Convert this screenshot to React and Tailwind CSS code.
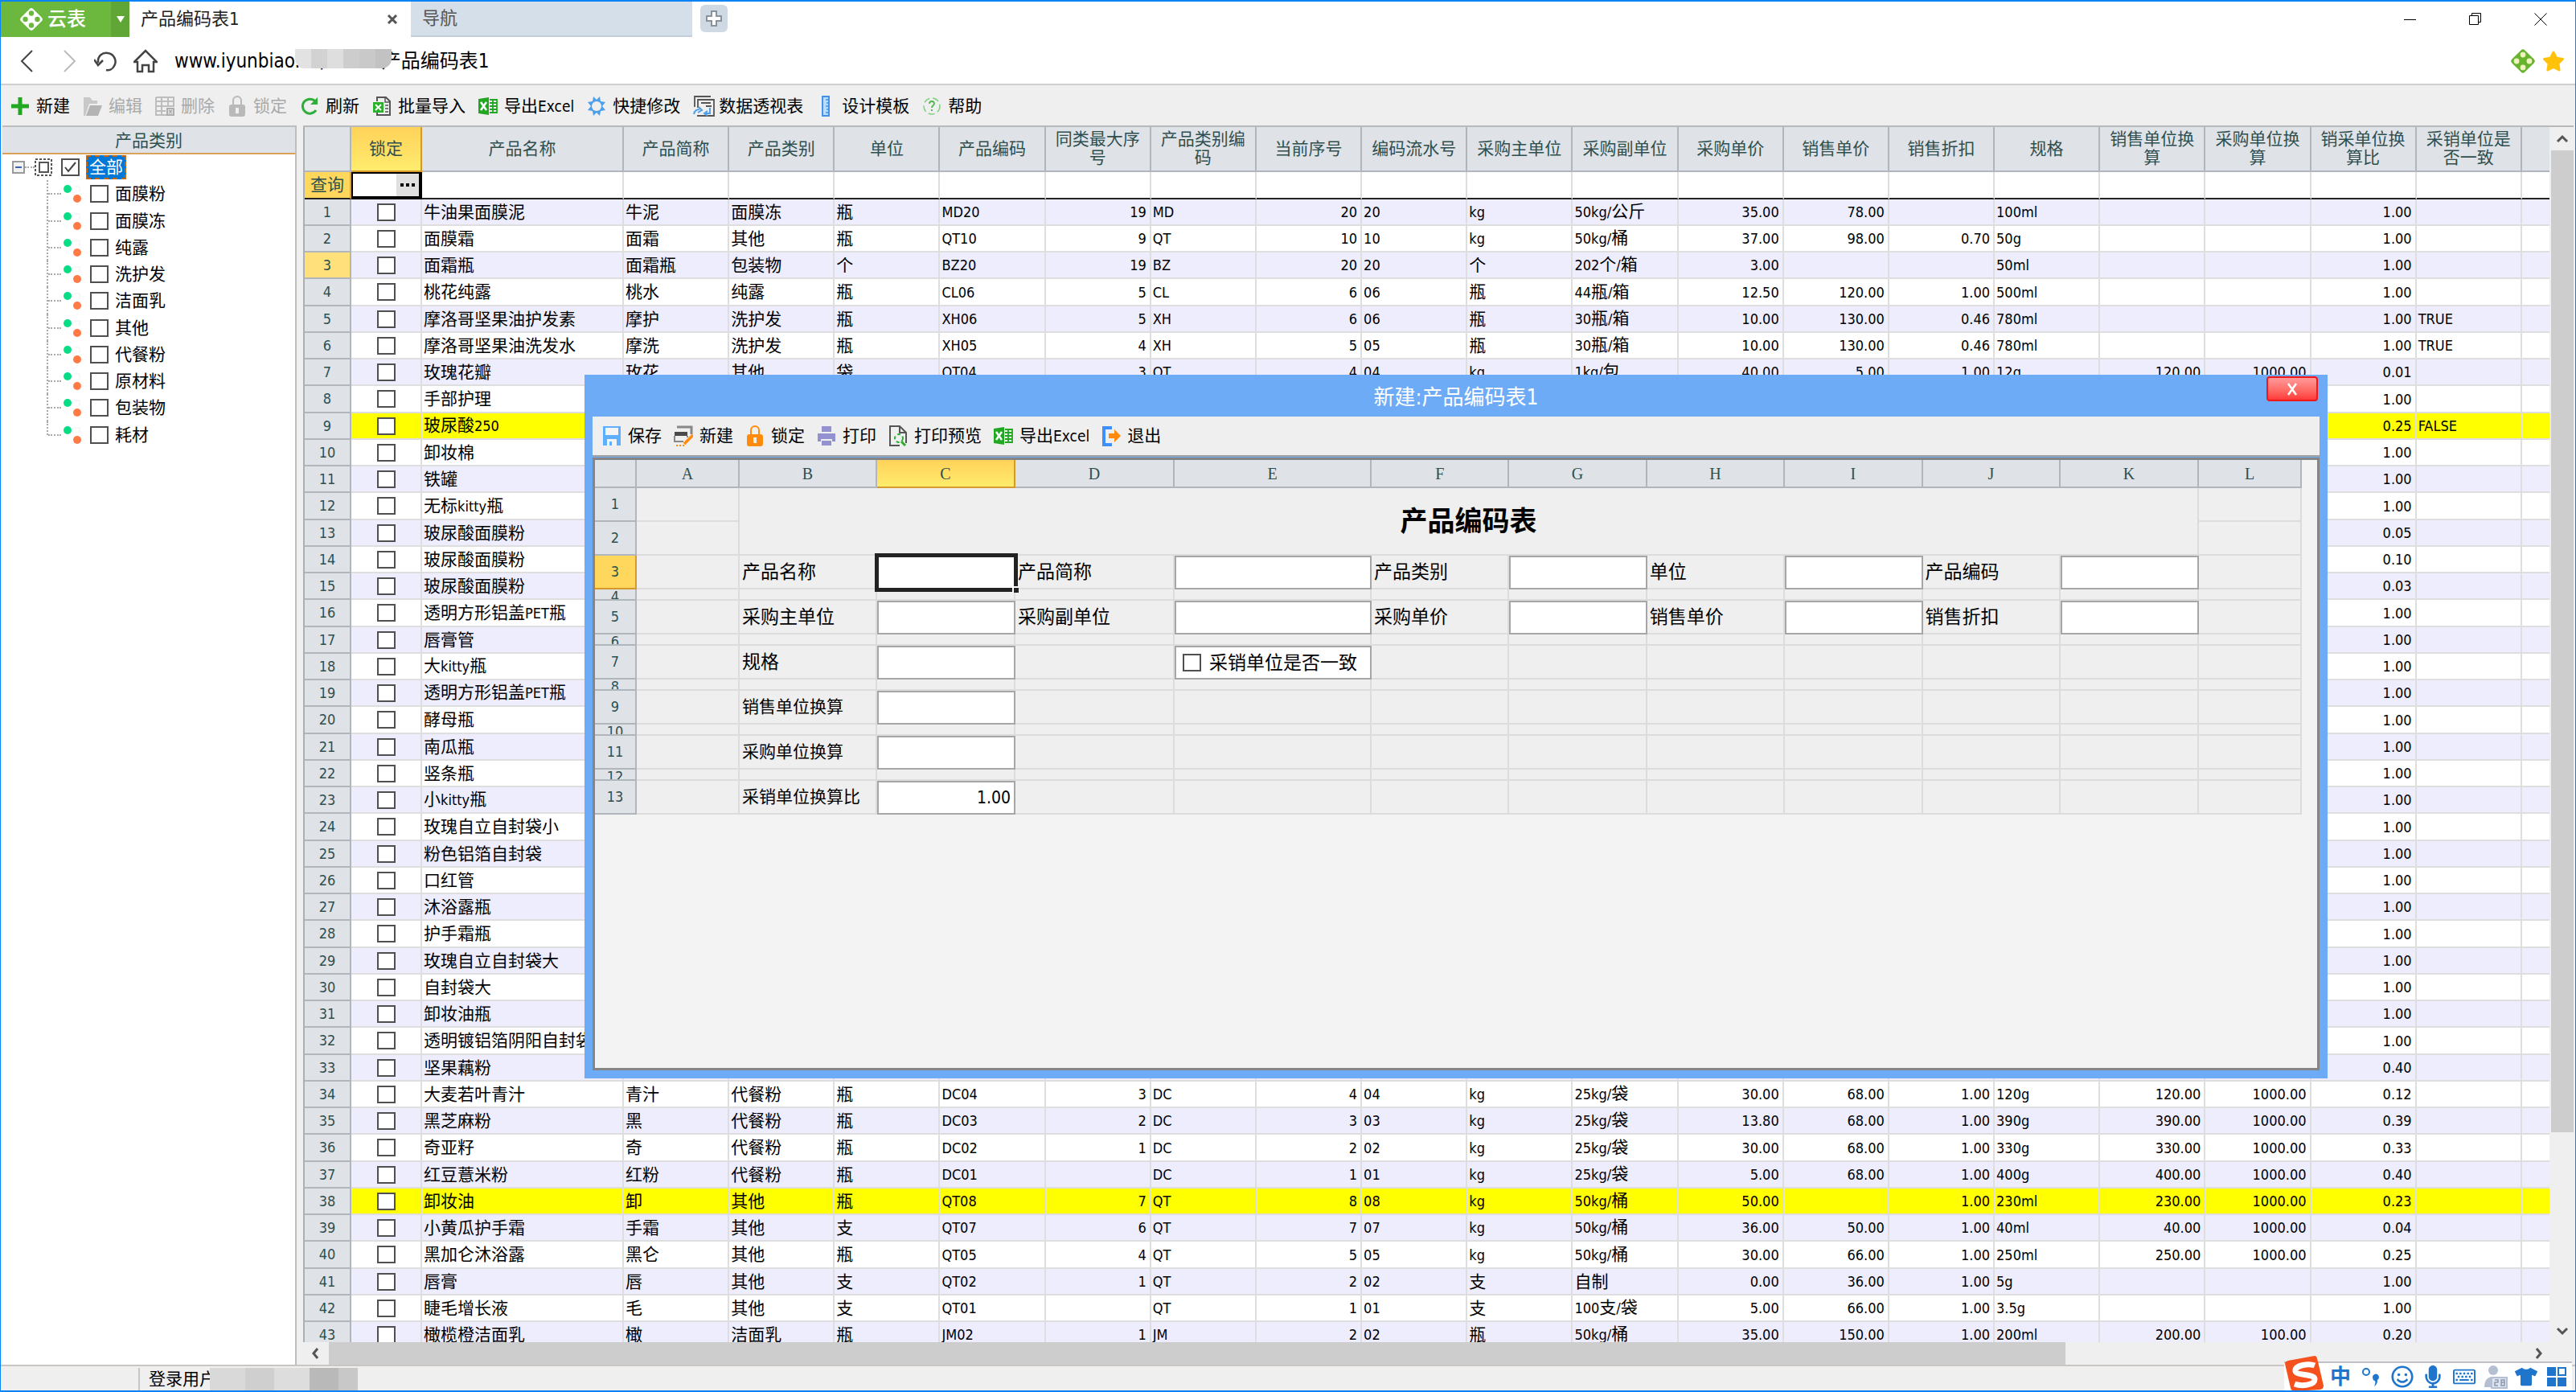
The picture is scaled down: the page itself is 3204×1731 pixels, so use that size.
import { useState } from 'react';
import { FaMicrophone, FaRegKeyboard, FaRegSmile, FaStar, FaTshirt } from 'react-icons/fa';

const categories = ['面膜粉', '面膜冻', '纯露', '洗护发', '洁面乳', '其他', '代餐粉', '原材料', '包装物', '耗材'];

// n = right aligned number
const columns = [
  { title: '产品名称' },
  { title: '产品简称' },
  { title: '产品类别' },
  { title: '单位' },
  { title: '产品编码' },
  { title: '同类最大序号', n: true },
  { title: '产品类别编码' },
  { title: '当前序号', n: true },
  { title: '编码流水号' },
  { title: '采购主单位' },
  { title: '采购副单位' },
  { title: '采购单价', n: true },
  { title: '销售单价', n: true },
  { title: '销售折扣', n: true },
  { title: '规格' },
  { title: '销售单位换算', n: true },
  { title: '采购单位换算', n: true },
  { title: '销采单位换算比', n: true },
  { title: '采销单位是否一致' },
];

const brief = (name, ratio = '1.00', same = '') => [name, ...Array(16).fill(''), ratio, same];

const products = [
  ['牛油果面膜泥', '牛泥', '面膜冻', '瓶', 'MD20', '19', 'MD', '20', '20', 'kg', '50kg/公斤', '35.00', '78.00', '', '100ml', '', '', '1.00', ''],
  ['面膜霜', '面霜', '其他', '瓶', 'QT10', '9', 'QT', '10', '10', 'kg', '50kg/桶', '37.00', '98.00', '0.70', '50g', '', '', '1.00', ''],
  ['面霜瓶', '面霜瓶', '包装物', '个', 'BZ20', '19', 'BZ', '20', '20', '个', '202个/箱', '3.00', '', '', '50ml', '', '', '1.00', ''],
  ['桃花纯露', '桃水', '纯露', '瓶', 'CL06', '5', 'CL', '6', '06', '瓶', '44瓶/箱', '12.50', '120.00', '1.00', '500ml', '', '', '1.00', ''],
  ['摩洛哥坚果油护发素', '摩护', '洗护发', '瓶', 'XH06', '5', 'XH', '6', '06', '瓶', '30瓶/箱', '10.00', '130.00', '0.46', '780ml', '', '', '1.00', 'TRUE'],
  ['摩洛哥坚果油洗发水', '摩洗', '洗护发', '瓶', 'XH05', '4', 'XH', '5', '05', '瓶', '30瓶/箱', '10.00', '130.00', '0.46', '780ml', '', '', '1.00', 'TRUE'],
  ['玫瑰花瓣', '玫花', '其他', '袋', 'QT04', '3', 'QT', '4', '04', 'kg', '1kg/包', '40.00', '5.00', '1.00', '12g', '120.00', '1000.00', '0.01', ''],
  brief('手部护理'),
  brief('玻尿酸250', '0.25', 'FALSE'),
  brief('卸妆棉'),
  brief('铁罐'),
  brief('无标kitty瓶'),
  brief('玻尿酸面膜粉', '0.05'),
  brief('玻尿酸面膜粉', '0.10'),
  brief('玻尿酸面膜粉', '0.03'),
  brief('透明方形铝盖PET瓶'),
  brief('唇膏管'),
  brief('大kitty瓶'),
  brief('透明方形铝盖PET瓶'),
  brief('酵母瓶'),
  brief('南瓜瓶'),
  brief('竖条瓶'),
  brief('小kitty瓶'),
  brief('玫瑰自立自封袋小'),
  brief('粉色铝箔自封袋'),
  brief('口红管'),
  brief('沐浴露瓶'),
  brief('护手霜瓶'),
  brief('玫瑰自立自封袋大'),
  brief('自封袋大'),
  brief('卸妆油瓶'),
  brief('透明镀铝箔阴阳自封袋'),
  brief('坚果藕粉', '0.40'),
  ['大麦若叶青汁', '青汁', '代餐粉', '瓶', 'DC04', '3', 'DC', '4', '04', 'kg', '25kg/袋', '30.00', '68.00', '1.00', '120g', '120.00', '1000.00', '0.12', ''],
  ['黑芝麻粉', '黑', '代餐粉', '瓶', 'DC03', '2', 'DC', '3', '03', 'kg', '25kg/袋', '13.80', '68.00', '1.00', '390g', '390.00', '1000.00', '0.39', ''],
  ['奇亚籽', '奇', '代餐粉', '瓶', 'DC02', '1', 'DC', '2', '02', 'kg', '25kg/袋', '30.00', '68.00', '1.00', '330g', '330.00', '1000.00', '0.33', ''],
  ['红豆薏米粉', '红粉', '代餐粉', '瓶', 'DC01', '', 'DC', '1', '01', 'kg', '25kg/袋', '5.00', '68.00', '1.00', '400g', '400.00', '1000.00', '0.40', ''],
  ['卸妆油', '卸', '其他', '瓶', 'QT08', '7', 'QT', '8', '08', 'kg', '50kg/桶', '50.00', '', '1.00', '230ml', '230.00', '1000.00', '0.23', ''],
  ['小黄瓜护手霜', '手霜', '其他', '支', 'QT07', '6', 'QT', '7', '07', 'kg', '50kg/桶', '36.00', '50.00', '1.00', '40ml', '40.00', '1000.00', '0.04', ''],
  ['黑加仑沐浴露', '黑仑', '其他', '瓶', 'QT05', '4', 'QT', '5', '05', 'kg', '50kg/桶', '30.00', '66.00', '1.00', '250ml', '250.00', '1000.00', '0.25', ''],
  ['唇膏', '唇', '其他', '支', 'QT02', '1', 'QT', '2', '02', '支', '自制', '0.00', '36.00', '1.00', '5g', '', '', '1.00', ''],
  ['睫毛增长液', '毛', '其他', '支', 'QT01', '', 'QT', '1', '01', '支', '100支/袋', '5.00', '66.00', '1.00', '3.5g', '', '', '1.00', ''],
  ['橄榄橙洁面乳', '橄', '洁面乳', '瓶', 'JM02', '1', 'JM', '2', '02', '瓶', '50kg/桶', '35.00', '150.00', '1.00', '200ml', '200.00', '100.00', '0.20', ''],
];

const highlighted = [9, 38];

const sheetColumns = ['A', 'B', 'C', 'D', 'E', 'F', 'G', 'H', 'I', 'J', 'K', 'L'];

const sheetRows = [
  { n: 3, tall: true, labels: { B: '产品名称', D: '产品简称', F: '产品类别', H: '单位', J: '产品编码' } },
  { n: 4 },
  { n: 5, tall: true, labels: { B: '采购主单位', D: '采购副单位', F: '采购单价', H: '销售单价', J: '销售折扣' } },
  { n: 6 },
  { n: 7, tall: true, labels: { B: '规格' }, check: 'E' },
  { n: 8 },
  { n: 9, tall: true, labels: { B: '销售单位换算' } },
  { n: 10 },
  { n: 11, tall: true, labels: { B: '采购单位换算' } },
  { n: 12 },
  { n: 13, tall: true, labels: { B: '采销单位换算比' }, value: '1.00' },
];

// latin runs are set smaller than the chinese text around them
function Mixed({ text }) {
  return text.split(/([\x20-\x7e]+)/).map((part, i) =>
    i % 2 ? <span key={i} className="text-[18px]">{part}</span> : part,
  );
}

function Icon({ children, className = 'w-6 h-[26px]' }) {
  return (
    <svg viewBox="0 0 24 26" fill="none" className={`shrink-0 ${className}`} aria-hidden="true">
      {children}
    </svg>
  );
}

const PlusIcon = () => <Icon><path d="M12 2v22M1 13h22" stroke="#22a722" strokeWidth="5" /></Icon>;
const FolderIcon = () => (
  <Icon>
    <path d="M1 25V2h8l3 4h6v4H8L3 25z" fill="#c8c8c8" />
    <path d="M9 12h15l-5 13H4z" fill="#b4b4b4" />
  </Icon>
);
const DeleteGridIcon = () => (
  <Icon>
    <path d="M1 2h22v12M1 2v22h14M1 7h22M1 13h22M1 19h12M8 2v22M16 2v12" stroke="#bdbdbd" strokeWidth="2" />
    <path d="M15 16h8v8h-8zM17 18l4 4M21 18l-4 4" stroke="#adadad" strokeWidth="2" />
  </Icon>
);
const LockIcon = ({ color = '#b9b9b9' }) => (
  <Icon>
    <path d="M7 12V6a5 5 0 0 1 10 0v6" stroke={color} strokeWidth="2" />
    <rect x="2" y="11" width="20" height="15" rx="3" fill={color} />
    <path d="M12 15v7" stroke="#efefef" strokeWidth="4" />
  </Icon>
);
const RefreshIcon = () => (
  <Icon>
    <path d="M20 18a9 9 0 1 1-1-11" stroke="#2fae3c" strokeWidth="3" />
    <path d="M22 2v9h-9z" fill="#2fae3c" />
  </Icon>
);
const ImportIcon = () => (
  <Icon>
    <path d="M6 7V2h11l5 5v17H6v-3" stroke="#555" strokeWidth="2" />
    <path d="M16 2v6h6M16 12h4M16 16h4M16 20h4" stroke="#555" strokeWidth="1.5" />
    <path d="M1 8h13v13H1z" fill="#2bb02b" />
    <path d="M4 11l7 7M11 11l-7 7" stroke="#fff" strokeWidth="2" />
  </Icon>
);
const ExcelIcon = () => (
  <Icon>
    <path d="M0 4l13-2v22L0 22z" fill="#22a722" />
    <path d="M3 8l7 10M10 8L3 18" stroke="#fff" strokeWidth="2.5" />
    <path d="M14 5h9v16h-9M14 9h9M14 13h9M14 17h9M18 5v16" stroke="#22a722" strokeWidth="1.8" />
  </Icon>
);
const GearIcon = () => (
  <Icon>
    <path
      d="M12 5l4-4 1 6 6 1-4 5 4 5-6 1-1 6-4-4-4 4-1-6-6-1 4-5-4-5 6-1 1-6z"
      fill="#4d9fea"
    />
    <circle cx="12" cy="13" r="6" fill="#efefef" />
  </Icon>
);
const PivotIcon = () => (
  <Icon className="w-7 h-[26px]">
    <path d="M0 14V1h20M4 15V5h20v20H3M8 9h12M14 13h7" stroke="#555" strokeWidth="1.8" />
    <path d="M-1 23c1-5 4-6 7-6M5 14l4 4-5 3M12 22h7v-7M16 19l-4 3 4 3" stroke="#4d9fea" strokeWidth="2" />
  </Icon>
);
const RulerIcon = () => (
  <Icon>
    <rect x="8" y="1" width="8" height="24" fill="#b9dcff" stroke="#4393ee" strokeWidth="2" />
    <path d="M12 5h4M13 9h3M12 13h4M13 17h3M12 21h4" stroke="#4393ee" strokeWidth="1.5" />
  </Icon>
);
const HelpIcon = () => (
  <Icon>
    <circle cx="12" cy="13" r="10" stroke="#7fcf7f" strokeWidth="1.5" strokeDasharray="8 4" />
    <path d="M9 10c0-4 6-4 6 0 0 2-3 2-3 5M12 17v2" stroke="#4fb84f" strokeWidth="1.8" />
  </Icon>
);
const SaveIcon = () => (
  <Icon>
    <path d="M1 1h22v24H1z" fill="#5eb0ff" />
    <path d="M4 3h16v9H4zM6 17h12v8H6z" fill="#f4f4f4" />
    <path d="M9 20h3v5H9z" fill="#5eb0ff" />
  </Icon>
);
const NewFormIcon = () => (
  <Icon>
    <path d="M4 2h18v9" stroke="#888" strokeWidth="3" />
    <path d="M1 8h16v5H1z" fill="#4a4a4a" />
    <path d="M1 13v7h11M17 13v2" stroke="#888" strokeWidth="2" />
    <path d="M24 12L13 23" stroke="#ff8a0c" strokeWidth="3.5" />
    <path d="M3 25h10" stroke="#ff8a0c" strokeWidth="2" strokeDasharray="2 2" />
  </Icon>
);
const PrintIcon = () => (
  <Icon>
    <path d="M6 1h12v7H6zM1 10h22v10h-4v-3H5v3H1zM6 19h12v6H6z" fill="#9491d0" />
  </Icon>
);
const PreviewIcon = () => (
  <Icon>
    <path d="M14 25H2V1h12l8 8v13M14 1v8h8" stroke="#555" strokeWidth="2" />
    <circle cx="13" cy="16" r="5" stroke="#2bb02b" strokeWidth="2" strokeDasharray="4 3" />
    <path d="M16 20l5 5" stroke="#2bb02b" strokeWidth="3" />
  </Icon>
);
const ExitIcon = () => (
  <Icon>
    <path d="M13 3H3v21h10" stroke="#3f8ffb" strokeWidth="4" />
    <path d="M9 10h7V5l8 8-8 8v-5H9z" fill="#ff8a0c" />
  </Icon>
);

function Diamond({ className, color, hole }) {
  return (
    <svg viewBox="0 0 30 30" className={className} aria-hidden="true">
      <rect x="5" y="5" width="20" height="20" rx="3" fill={color} transform="rotate(45 15 15)" />
      <circle cx="15" cy="8" r="3" fill={hole} />
      <circle cx="15" cy="22" r="3" fill={hole} />
      <circle cx="8" cy="15" r="3" fill={hole} />
      <circle cx="22" cy="15" r="3" fill={hole} />
    </svg>
  );
}

function ToolButton({ icon, label, disabled }) {
  return (
    <button type="button" disabled={disabled} className="flex items-center gap-2 text-black disabled:text-[#a9a9a9] whitespace-nowrap">
      <span className="w-6 flex items-center">{icon}</span>
      {label}
    </button>
  );
}

function Check({ id, label, checked = false }) {
  const [on, setOn] = useState(checked);
  return (
    <span className="grid w-[23px] h-[22px] shrink-0">
      <input
        id={id}
        type="checkbox"
        aria-label={label}
        checked={on}
        onChange={(e) => setOn(e.target.checked)}
        className="appearance-none col-start-1 row-start-1 w-full h-full bg-white border-2 border-[#505050]"
      />
      {on && (
        <svg viewBox="0 0 23 22" className="col-start-1 row-start-1 pointer-events-none" fill="none">
          <path d="M5 11l4 5 9-11" stroke="#444" strokeWidth="2" />
        </svg>
      )}
    </span>
  );
}

function TitleBar() {
  return (
    <div className="flex items-start h-11 shrink-0 bg-white">
      <button type="button" className="flex items-center h-11 w-[137px] pl-[22px] gap-1 bg-[#6cb83e] text-white text-[24px] font-medium">
        <Diamond className="w-8 h-8" color="#fff" hole="#6cb83e" />
        云表
      </button>
      <button type="button" aria-label="菜单" className="flex items-center justify-center h-11 w-[23px] bg-[#5fa637]">
        <svg viewBox="0 0 10 8" className="w-[10px] h-2"><path d="M0 0h10L5 8z" fill="#fff" /></svg>
      </button>
      <div className="flex items-center justify-between h-11 w-[350px] pl-[14px] pr-4 bg-white text-[22px] text-[#222]">
        产品编码表1
        <button type="button" aria-label="关闭标签">
          <svg viewBox="0 0 14 14" className="w-[14px] h-[14px]"><path d="M2 2l10 10M12 2L2 12" stroke="#555" strokeWidth="3" /></svg>
        </button>
      </div>
      <button type="button" className="flex items-center h-11 w-[350px] pl-[14px] bg-[#d5dfea] border-b-2 border-[#c3ced9] text-[22px] text-[#555]">
        导航
      </button>
      <button type="button" aria-label="新标签" className="flex items-center justify-center w-[34px] h-[34px] ml-[10px] mt-1 rounded-md bg-[#cfd9e3]">
        <svg viewBox="0 0 20 20" className="w-5 h-5"><path d="M7 1h6v6h6v6h-6v6H7v-6H1V7h6z" fill="#fff" stroke="#8a939c" strokeWidth="2" /></svg>
      </button>
      <div className="flex ml-auto mr-[3px]">
        <button type="button" aria-label="最小化" className="flex items-center justify-center w-[81px] h-11">
          <svg viewBox="0 0 16 16" className="w-4 h-4"><path d="M0 8.5h15" stroke="#000" /></svg>
        </button>
        <button type="button" aria-label="还原" className="flex items-center justify-center w-[81px] h-11">
          <svg viewBox="0 0 16 16" className="w-4 h-4" fill="none"><path d="M.5 3.5h11v11H.5zM3.500 3.500V.5h11v11h-3" stroke="#000" /></svg>
        </button>
        <button type="button" aria-label="关闭" className="flex items-center justify-center w-[81px] h-11">
          <svg viewBox="0 0 16 16" className="w-4 h-4"><path d="M.5.5l15 15M15.500.5l-15 15" stroke="#000" /></svg>
        </button>
      </div>
    </div>
  );
}

const mosaic = ['bg-[#e2e2e2]', 'bg-[#d2d2d2]', 'bg-[#dedede]', 'bg-[#cdcdcd]', 'bg-[#c9c9c9]', 'bg-[#c2c2c2]'];

function AddressBar() {
  return (
    <div className="flex items-center h-[60px] shrink-0 pl-5 pr-[13px] pt-[2px] bg-white border-b-2 border-[#cfcfcf]">
      <button type="button" aria-label="后退" className="w-[50px]">
        <svg viewBox="0 0 24 30" className="w-6 h-[30px]" fill="none"><path d="M19 2L6 15l13 13" stroke="#444" strokeWidth="2" /></svg>
      </button>
      <button type="button" aria-label="前进" className="w-[46px]">
        <svg viewBox="0 0 24 30" className="w-6 h-[30px]" fill="none"><path d="M9 2l13 13L9 28" stroke="#bbb" strokeWidth="2" /></svg>
      </button>
      <button type="button" aria-label="刷新" className="w-[49px]">
        <svg viewBox="0 0 30 30" className="w-[30px] h-[30px]" fill="none">
          <path d="M5 17C4 8 11 4 17 5c8 1 12 10 8 16-2 4-6 6-10 5" stroke="#444" strokeWidth="2.500" />
          <path d="M0 13l5 7 6-6" stroke="#444" strokeWidth="2.500" />
        </svg>
      </button>
      <button type="button" aria-label="主页" className="w-[51px]">
        <svg viewBox="0 0 30 30" className="w-[30px] h-[30px]" fill="none">
          <path d="M1 16L15 2l14 14h-4v12h-6v-8h-8v8H5V16z" stroke="#444" strokeWidth="2.500" />
        </svg>
      </button>
      <div className="relative flex-1">
        <input
          aria-label="地址"
          className="w-full text-[24px] leading-[34px] text-black outline-none"
          defaultValue={'www.iyunbiao.cn/\u00a0\u00a0\u00a0\u00a0\u00a0\u00a0\u00a0\u00a0\u00a0\u00a0产品编码表1'}
        />
        <div className="absolute left-[150px] top-[2px] flex h-6 rounded-b-xl overflow-hidden" aria-hidden="true">
          {mosaic.map((tone) => (
            <span key={tone} className={`w-5 h-full ${tone}`} />
          ))}
        </div>
      </div>
      <Diamond className="w-[34px] h-[34px]" color="#69b42e" hole="#eef3c0" />
      <FaStar className="w-[28px] h-[28px] ml-[7px] text-[#ffc20a]" />
    </div>
  );
}

function Toolbar() {
  return (
    <div className="flex items-center gap-4 h-[50px] shrink-0 pl-3 pt-px bg-[#efefef] text-[21px]">
      <ToolButton icon={<PlusIcon />} label="新建" />
      <ToolButton icon={<FolderIcon />} label="编辑" disabled />
      <ToolButton icon={<DeleteGridIcon />} label="删除" disabled />
      <ToolButton icon={<LockIcon />} label="锁定" disabled />
      <ToolButton icon={<RefreshIcon />} label="刷新" />
      <ToolButton icon={<ImportIcon />} label="批量导入" />
      <ToolButton icon={<ExcelIcon />} label={<span>导出<span className="text-[19px]">Excel</span></span>} />
      <ToolButton icon={<GearIcon />} label="快捷修改" />
      <ToolButton icon={<PivotIcon />} label="数据透视表" />
      <ToolButton icon={<RulerIcon />} label="设计模板" />
      <ToolButton icon={<HelpIcon />} label="帮助" />
    </div>
  );
}

function CategoryTree() {
  return (
    <aside className="flex flex-col w-[366px] shrink-0 ml-[2px] bg-white border-t-2 border-r-2 border-[#bdbdbd]">
      <h2 className="h-[34px] shrink-0 flex items-center justify-center pt-px bg-[#dfe3e8] border-b-2 border-[#dba35a] text-[#2f4f4f]">
        产品类别
      </h2>
      <div className="flex items-center h-[32px] pl-3">
        <button type="button" aria-label="折叠" className="flex items-center justify-center w-4 h-4 border-2 border-[#9a9a9a] bg-[#f2f2f2]">
          <span className="w-2 h-[2px] bg-[#3d62b5]" />
        </button>
        <span className="w-3 border-t-2 border-dotted border-[#aaa]" />
        <svg viewBox="0 0 22 22" className="w-[22px] h-[22px] mr-[11px]" fill="none">
          <rect x="1" y="1" width="20" height="20" stroke="#555" strokeWidth="2" strokeDasharray="3 2" />
          <rect x="6" y="5" width="11" height="12" stroke="#555" strokeWidth="2" />
        </svg>
        <Check id="cat-all" checked />
        <label htmlFor="cat-all" className="flex items-center ml-2 h-[30px] px-[2px] bg-[#0078d7] border-2 border-dashed border-[#c8640c] text-white leading-none">
          全部
        </label>
      </div>
      <ul className="ml-[55px]">
        {categories.map((name, i) => (
          <li key={name} className={`flex items-stretch ${i % 4 === 0 ? 'h-[34px]' : 'h-[33px]'}`}>
            <span className={`border-l-2 border-dotted border-[#aaa] ${i === 9 ? 'h-1/2' : ''}`} />
            <span className="w-4 mt-4 border-t-2 border-dotted border-[#aaa]" />
            <svg viewBox="0 0 26 26" className="w-[26px] h-[26px] mt-1 mr-[10px]">
              <circle cx="8" cy="7" r="5" fill="#08dd86" />
              <circle cx="20" cy="19" r="5" fill="#ff7a45" />
              <path d="M16 4h7v7" stroke="#f0f0f0" fill="none" />
            </svg>
            <span className="flex items-center">
              <Check id={`cat-${i}`} />
              <label htmlFor={`cat-${i}`} className="ml-2">{name}</label>
            </span>
          </li>
        ))}
      </ul>
    </aside>
  );
}

function ProductGrid() {
  return (
    <div className="flex-1 min-h-0 overflow-hidden">
      <table className="w-full table-fixed border-separate border-spacing-0 border-l-2 border-[#aab0b5]">
        <colgroup>
          <col className="w-[58px]" />
          <col className="w-[88px]" />
          <col className="w-[251px]" />
          {columns.slice(1).map((c) => <col key={c.title} />)}
          <col className="w-[34px]" />
        </colgroup>
        <thead>
          <tr className="h-[56px] text-[#2f4f4f] leading-[23px]">
            <th className="bg-[#dfe3e8] border-r-2 border-b-2 border-[#b0b6bb]" />
            <th className="bg-linear-to-b from-[#ffd25a] to-[#ffec6c] border-r-2 border-b-2 border-[#d69a2a] font-normal">锁定</th>
            {columns.map((c) => (
              <th key={c.title} className="px-3 bg-[#dfe3e8] border-r-2 border-b-2 border-[#b0b6bb] font-normal">{c.title}</th>
            ))}
            <th className="bg-[#dfe3e8] border-b-2 border-[#b0b6bb]" />
          </tr>
          <tr className="h-[34px]">
            <th className="p-0 bg-[#ffd75c] border-r-2 border-b-2 border-r-[#c9a44a] border-b-[#222] font-normal text-[#2f4f4f]">查询</th>
            <td className="p-0">
              <div className="flex h-[34px] border-2 border-b-4 border-r-4 border-black bg-white">
                <input aria-label="查询锁定" className="flex-1 min-w-0 outline-none" />
                <button type="button" aria-label="更多" className="flex items-center justify-center gap-[3px] w-7 bg-[#e0e0e0]">
                  <span className="w-1 h-1 bg-black" />
                  <span className="w-1 h-1 bg-black" />
                  <span className="w-1 h-1 bg-black" />
                </button>
              </div>
            </td>
            {columns.map((c) => (
              <td key={c.title} className="bg-white border-r-2 border-b-2 border-r-[#dedede] border-b-[#222]" />
            ))}
            <td className="bg-white border-b-2 border-[#222]" />
          </tr>
        </thead>
        <tbody>
          {products.map((row, r) => {
            const no = r + 1;
            const tone = highlighted.includes(no) ? 'bg-[#ffff00]' : no % 2 ? 'bg-[#eeedfe]' : 'bg-white';
            return (
              <tr key={no} className={`${no % 4 === 0 ? 'h-[34px]' : 'h-[33px]'} ${tone} leading-[28px]`}>
                <th className={`p-0 border-r-2 border-b-2 border-[#b0b6bb] font-normal text-[18px] text-[#2f4f4f] ${no === 3 ? 'bg-[#ffe07a]' : 'bg-[#dfe3e8]'}`}>{no}</th>
                <td className="p-0 border-r-2 border-b-2 border-[#dedede]">
                  <div className="flex justify-center"><Check label={row[0]} /></div>
                </td>
                {row.map((value, c) => (
                  <td
                    key={c}
                    className={`py-0 pl-[2px] pr-1 border-r-2 border-b-2 border-[#dedede] whitespace-nowrap overflow-hidden ${columns[c].n ? 'text-right' : ''}`}
                  >
                    <Mixed text={value} />
                  </td>
                ))}
                <td className="border-b-2 border-[#dedede]" />
              </tr>
            );
          })}
        </tbody>
      </table>
    </div>
  );
}

function Chevron({ d }) {
  return (
    <svg viewBox="0 0 16 16" className="w-4 h-4 shrink-0" fill="none">
      <path d={d} stroke="#555" strokeWidth="3" />
    </svg>
  );
}

function GridArea() {
  return (
    <main className="flex flex-1 min-w-0 ml-2 mr-[2px] border-t-2 border-[#b9b9b9]">
      <div className="flex flex-col flex-1 min-w-0">
        <ProductGrid />
        <div className="flex items-center h-7 shrink-0 bg-[#efefef]">
          <span className="flex justify-center w-[32px]"><Chevron d="M10 2L5 8l5 6" /></span>
          <span className="flex-1 flex h-full">
            <span className="w-[79%] h-full bg-[#cdcdcd]" />
          </span>
          <span className="flex justify-center w-7"><Chevron d="M6 2l5 6-5 6" /></span>
        </div>
      </div>
      <div className="flex flex-col items-center w-[28px] ml-[2px] bg-[#efefef]">
        <span className="flex items-center h-[29px] shrink-0"><Chevron d="M2 11l6-6 6 6" /></span>
        <span className="flex-1 w-full">
          <span className="block w-full h-[84%] bg-[#cdcdcd]" />
        </span>
        <span className="flex items-center h-[29px] mb-7"><Chevron d="M2 5l6 6 6-6" /></span>
      </div>
    </main>
  );
}

function StatusBar() {
  return (
    <footer className="flex items-center h-8 shrink-0 pt-[2px] bg-[#efefef] border-t-2 border-[#c9c5c2]">
      <span className="w-[173px] self-stretch border-r-2 border-[#c9c5c2]" />
      <span className="ml-[11px]">登录用户</span>
      <span className="flex h-7 -ml-2" aria-hidden="true">
        <span className="w-11 bg-[#d9d9d9]" />
        <span className="w-9 bg-[#cfcfcf]" />
        <span className="w-11 bg-[#dddddd]" />
        <span className="w-9 bg-[#b9b9b9]" />
        <span className="w-6 bg-[#c8c8c8]" />
      </span>
    </footer>
  );
}

function InputMethodBar() {
  return (
    <div className="absolute right-1 bottom-0 flex items-center h-9 bg-white border-t-2 border-[#c0c0c8] text-[#1f74cc]">
      <svg viewBox="0 0 50 44" className="w-[50px] h-11 mb-2" fill="none">
        <path d="M1 10Q1 7 5 6L38 0q2 0 3 3l8 34q0 4-4 5l-32 2q-4 0-5-4z" fill="#f4511e" />
        <path d="M38 12C30 9 13 12 14 19c1 6 24 3 24 10 0 8-17 9-25 6" stroke="#fff" strokeWidth="7" />
      </svg>
      <span className="w-10 text-center text-[26px] font-bold leading-9">中</span>
      <svg viewBox="0 0 38 30" className="w-[38px] h-[30px]" fill="none">
        <circle cx="12" cy="9" r="4" stroke="#1f74cc" strokeWidth="2" />
        <path d="M20 15a4 4 0 1 1 6 4c0 4-1 6-4 8 1-2 2-5 1-7-2 0-3-2-3-5z" fill="#1f74cc" />
      </svg>
      <FaRegSmile className="w-7 h-7 mx-[5px]" />
      <FaMicrophone className="w-7 h-7 mx-[5px]" />
      <FaRegKeyboard className="w-7 h-7 mx-[6px]" />
      <svg viewBox="0 0 30 30" className="w-[30px] h-[30px] mx-1">
        <circle cx="12" cy="7" r="6" fill="#b5bfd2" />
        <path d="M1 28c0-9 4-13 11-13s10 4 10 13z" fill="#b5bfd2" />
        <rect x="10" y="16" width="19" height="13" fill="#dfe4ee" stroke="#b5bfd2" strokeWidth="2" />
        <path d="M14 19h4v3h-4v4h4M22 19h4v7h-4zM22 22h4" stroke="#8b98b3" strokeWidth="1.500" fill="none" />
      </svg>
      <FaTshirt className="w-7 h-7 mx-[5px]" />
      <svg viewBox="0 0 26 26" className="w-[26px] h-[26px] mx-[6px]">
        <path d="M1 1h11v11H1zM1 14h11v11H1zM14 14h11v11H14z" fill="#1f74cc" />
        <rect x="15" y="2" width="9" height="9" fill="none" stroke="#1f74cc" strokeWidth="2" />
      </svg>
    </div>
  );
}

const line = 'p-0 border-r-2 border-b-2 border-[#dcdcdc]';

function SheetRow({ row }) {
  const labels = row.labels || {};
  return (
    <tr className={row.tall ? 'h-[42px]' : 'h-[14px]'}>
      <th className={`p-0 border-r-2 border-b-2 font-normal ${row.n === 3 ? 'bg-[#ffd75c] border-[#d69a2a]' : 'bg-[#dfe3e8] border-[#b0b6bb]'}`}>
        <div className={`flex justify-center overflow-hidden text-[18px] leading-[18px] text-[#2f4f4f] ${row.tall ? '' : 'h-3'}`}>{row.n}</div>
      </th>
      {sheetColumns.map((col, i) => {
        if (labels[col]) {
          return (
            <td key={col} className={`${line} pl-[3px] whitespace-nowrap leading-[30px] ${labels[col].length > 5 ? 'text-[21px]' : 'text-[23px]'}`}>
              <label htmlFor={`cell-${row.n}-${sheetColumns[i + 1]}`}>{labels[col]}</label>
            </td>
          );
        }
        if (labels[sheetColumns[i - 1]]) {
          const selected = row.n === 3 && col === 'C';
          return (
            <td key={col} className="p-0 relative">
              <input
                id={`cell-${row.n}-${col}`}
                defaultValue={row.value}
                className={`block w-full h-[42px] pr-1 bg-white border-2 text-right text-[21px] outline-none ${selected ? 'ring-3 ring-[#222] border-[#222]' : 'border-[#a6a6a6]'}`}
              />
              {selected && <span className="absolute -right-1 -bottom-1 w-2 h-2 bg-[#222] border-t-2 border-l-2 border-white" />}
            </td>
          );
        }
        if (row.check === col) {
          return (
            <td key={col} className="p-0">
              <div className="flex items-center h-[42px] pl-2 gap-[10px] bg-white border-2 border-[#a6a6a6] text-[23px] whitespace-nowrap">
                <Check id="same-unit" />
                <label htmlFor="same-unit" className="leading-none">采销单位是否一致</label>
              </div>
            </td>
          );
        }
        return <td key={col} className={line} />;
      })}
    </tr>
  );
}

function NewProductDialog({ onClose }) {
  return (
    <div
      role="dialog"
      aria-label="新建:产品编码表1"
      className="absolute left-[726px] right-[308px] top-[464px] h-[875px] flex flex-col px-[10px] pb-[10px] bg-[#6eabf7]"
    >
      <div className="relative flex items-center justify-center h-[52px] pt-1 shrink-0">
        <h2 className="text-[26px] text-white">新建:产品编码表1</h2>
        <button
          type="button"
          aria-label="关闭"
          onClick={onClose}
          className="absolute right-[2px] top-[2px] flex items-center justify-center w-16 h-[31px] rounded-sm border-2 border-[#f01818] bg-linear-to-b from-[#ff9a9a] to-[#ff3838]"
        >
          <svg viewBox="0 0 14 16" className="w-[14px] h-4"><path d="M2 1l10 14M12 1L2 15" stroke="#fff" strokeWidth="2.500" /></svg>
        </button>
      </div>
      <div className="flex items-center gap-[15px] h-[50px] shrink-0 pl-3 bg-[#efefef] border-b-2 border-[#a0a0a0] text-[21px]">
        <ToolButton icon={<SaveIcon />} label="保存" />
        <ToolButton icon={<NewFormIcon />} label="新建" />
        <ToolButton icon={<LockIcon color="#ff8a0c" />} label="锁定" />
        <ToolButton icon={<PrintIcon />} label="打印" />
        <ToolButton icon={<PreviewIcon />} label="打印预览" />
        <ToolButton icon={<ExcelIcon />} label={<span>导出<span className="text-[19px]">Excel</span></span>} />
        <ToolButton icon={<ExitIcon />} label="退出" />
      </div>
      <div className="flex-1 min-h-0 mt-px border-3 border-[#858585] bg-[#f3f3f3]">
        <table className="table-fixed w-[2123px] border-separate border-spacing-0 bg-[#efefef]">
          <colgroup>
            <col className="w-[52px]" />
            <col className="w-[128px]" />
            <col className="w-[171px]" />
            <col className="w-[172px]" />
            <col className="w-[198px]" />
            <col className="w-[245px]" />
            <col span="5" />
            <col className="w-[172px]" />
            <col className="w-[128px]" />
          </colgroup>
          <thead>
            <tr className="h-[35px] font-['Liberation_Serif',serif] text-[20px] leading-[28px] text-[#2f4f4f]">
              <th className="bg-[#dfe3e8] border-r-2 border-b-2 border-[#b0b6bb]" />
              {sheetColumns.map((col) => (
                <th
                  key={col}
                  className={`p-0 border-r-2 border-b-2 font-normal ${col === 'C' ? 'bg-linear-to-b from-[#ffd25a] to-[#ffec6c] border-[#d69a2a]' : 'bg-[#dfe3e8] border-[#b0b6bb]'}`}
                >
                  {col}
                </th>
              ))}
            </tr>
          </thead>
          <tbody>
            <tr className="h-[42px]">
              <th className="bg-[#dfe3e8] border-r-2 border-b-2 border-[#b0b6bb] font-normal text-[18px] leading-[18px] text-[#2f4f4f]">1</th>
              <td className={line} />
              <td rowSpan="2" colSpan="10" className={`${line} text-center text-[34px] leading-[40px] font-bold`}>产品编码表</td>
              <td className={line} />
            </tr>
            <tr className="h-[42px]">
              <th className="bg-[#dfe3e8] border-r-2 border-b-2 border-[#b0b6bb] font-normal text-[18px] leading-[18px] text-[#2f4f4f]">2</th>
              <td className={line} />
              <td className={line} />
            </tr>
            {sheetRows.map((row) => (
              <SheetRow key={row.n} row={row} />
            ))}
          </tbody>
        </table>
      </div>
    </div>
  );
}

export default function App() {
  const [dialogOpen, setDialogOpen] = useState(true);

  return (
    <div className="relative flex flex-col h-screen overflow-hidden bg-[#efefef] border-2 border-[#0a84f5] border-x-[1px] font-['DejaVu_Sans_Condensed','Noto_Sans_CJK_SC',sans-serif] text-[21px] leading-[28px] text-black">
      <TitleBar />
      <AddressBar />
      <Toolbar />
      <div className="flex flex-1 min-h-0">
        <CategoryTree />
        <GridArea />
      </div>
      <StatusBar />
      <InputMethodBar />
      {dialogOpen && <NewProductDialog onClose={() => setDialogOpen(false)} />}
    </div>
  );
}
